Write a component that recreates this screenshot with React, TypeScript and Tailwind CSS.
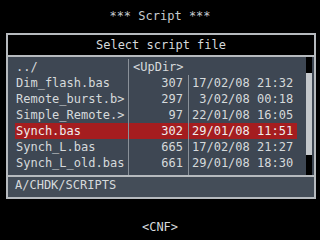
import React from "react";

type FileRow = {
  name: string;
  size: string;
  date: string;
  selected?: boolean;
};

const rows: FileRow[] = [
  { name: "../", size: "<UpDir>", date: "" },
  { name: "Dim_flash.bas", size: "307", date: "17/02/08 21:32" },
  { name: "Remote_burst.b>", size: "297", date: " 3/02/08 00:18" },
  { name: "Simple_Remote.>", size: "97", date: "22/01/08 16:05" },
  { name: "Synch.bas", size: "302", date: "29/01/08 11:51", selected: true },
  { name: "Synch_L.bas", size: "665", date: "17/02/08 21:27" },
  { name: "Synch_L_old.bas", size: "661", date: "29/01/08 18:30" },
];

const App: React.FC = () => {
  return (
    <div className="w-[320px] h-[240px] bg-black flex flex-col text-[12px] leading-[14px] text-[#d6dadc] font-['DejaVu_Sans_Mono',monospace] overflow-hidden">
      {/* title */}
      <div className="h-[33px] flex items-center justify-center pb-[2px] text-[#c8ccd0] whitespace-pre">
        *** Script ***
      </div>

      {/* dialog box */}
      <div className="ml-[6px] w-[310px] h-[166px] border-2 border-[#b6babe] flex flex-col">
        <div className="h-[22px] bg-black border-b-2 border-[#b6babe] flex items-center justify-center">
          Select script file
        </div>

        <div className="flex-1 flex bg-[#3e4753]">
          <div className="flex-1 flex flex-col pl-[7px] pr-[9px] pt-[2px]">
            {rows.map((r) => (
              <div
                key={r.name}
                className={`h-[16px] flex items-center whitespace-pre ${
                  r.selected ? "bg-[#a51d1f] text-[#f0eeee]" : ""
                }`}
              >
                <div className="w-[114px] h-full flex items-center pl-[1px] border-r border-[#8a9199]">
                  {r.name}
                </div>
                {r.date ? (
                  <>
                    <div className="w-[60px] h-full flex items-center justify-end pr-[5px] border-r border-[#8a9199]">
                      {r.size}
                    </div>
                    <div className="flex-1 h-full flex items-center pl-[3px]">
                      {r.date}
                    </div>
                  </>
                ) : (
                  <div className="flex-1 h-full flex items-center pl-[4px]">
                    {r.size}
                  </div>
                )}
              </div>
            ))}
            <div className="flex-1 flex">
              <div className="w-[114px] border-r border-[#8a9199]" />
              <div className="w-[60px] border-r border-[#8a9199]" />
            </div>
          </div>
          {/* scrollbar */}
          <div className="w-[6px] bg-black flex flex-col mr-[2px]">
            <div className="h-[16px]" />
            <div className="h-[82px] bg-[#c4c8cc]" />
          </div>
        </div>

        <div className="h-[22px] border-t-2 border-[#b6babe] bg-[#444d58] pl-[7px] pt-[1px]">
          A/CHDK/SCRIPTS
        </div>
      </div>

      <div className="flex-1 flex items-center justify-center pt-[15px]">
        &lt;CNF&gt;
      </div>
    </div>
  );
};

export default App;
